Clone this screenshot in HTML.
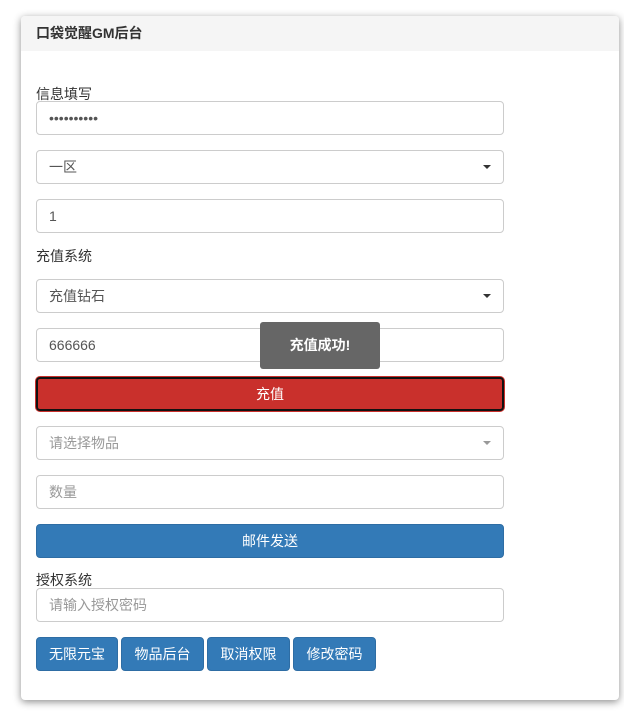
<!DOCTYPE html>
<html><head><meta charset="utf-8"><style>
body{margin:0;width:624px;height:711px;background:#fff;font-family:"Liberation Sans","Noto Sans CJK SC",sans-serif;font-size:14px;color:#333;position:relative;overflow:hidden}
.panel{position:absolute;left:21px;top:16px;width:598px;height:684px;background:#fff;border-radius:4px;box-shadow:0 2px 8px rgba(0,0,0,.45)}
.hd{height:35px;background:#f5f5f5;border-radius:4px 4px 0 0;font-weight:bold;font-size:14px;line-height:35px;padding-left:15px;color:#333}
.in{position:absolute;left:36px;width:466px;height:32px;border:1px solid #ccc;border-radius:4px;line-height:32px;padding-left:12px;box-sizing:content-box;width:454px;font-size:14px;color:#555}
.ph{color:#999}
.car{position:absolute;right:12px;top:14px;border-left:4px solid transparent;border-right:4px solid transparent;border-top:4px solid #333}
.lbl{position:absolute;left:36px;font-size:14px;color:#333}
.btn{position:absolute;color:#fff;text-align:center;border-radius:4px;font-size:14px}
.blue{background:#337ab7;border:1px solid #2e6da4}
</style></head><body>
<div class="panel"><div class="hd">口袋觉醒GM后台</div></div>
<div class="lbl" style="top:84px">信息填写</div>
<div class="in" style="top:101px">••••••••••</div>
<div class="in" style="top:150px">一区<span class="car"></span></div>
<div class="in" style="top:199px">1</div>
<div class="lbl" style="top:246px">充值系统</div>
<div class="in" style="top:279px">充值钻石<span class="car"></span></div>
<div class="in" style="top:328px">666666</div>
<div class="btn" style="left:36px;top:377px;width:464px;height:30px;line-height:30px;background:#c9302c;border:2px solid #111;box-shadow:0 0 0 1px #c9302c">充值</div>
<div class="in ph" style="top:426px">请选择物品<span class="car" style="border-top-color:#999"></span></div>
<div class="in ph" style="top:475px">数量</div>
<div class="btn blue" style="left:36px;top:524px;width:466px;height:32px;line-height:32px">邮件发送</div>
<div class="lbl" style="top:570px">授权系统</div>
<div class="in ph" style="top:588px">请输入授权密码</div>
<div class="btn blue" style="left:36px;top:637px;width:80px;height:32px;line-height:32px">无限元宝</div>
<div class="btn blue" style="left:121px;top:637px;width:81px;height:32px;line-height:32px">物品后台</div>
<div class="btn blue" style="left:207px;top:637px;width:81px;height:32px;line-height:32px">取消权限</div>
<div class="btn blue" style="left:293px;top:637px;width:81px;height:32px;line-height:32px">修改密码</div>
<div style="position:absolute;left:260px;top:322px;width:120px;height:47px;background:#666;border-radius:3px;color:#fff;font-weight:bold;text-align:center;line-height:47px;font-size:14px">充值成功!</div>
</body></html>
